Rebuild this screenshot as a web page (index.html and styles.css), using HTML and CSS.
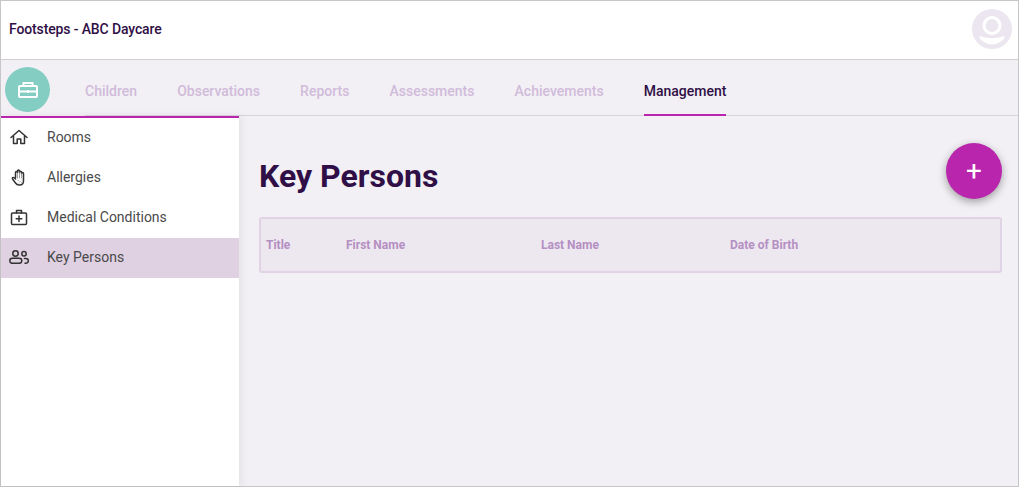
FILE: index.html
```html
<!DOCTYPE html>
<html lang="en">
<head>
    <meta charset="UTF-8">
    <title>Footsteps - ABC Daycare</title>
    <link rel="stylesheet" href="styles.css">
</head>
<body>
    <div class="app">
        <header class="topbar">
            <span class="brand">Footsteps - ABC Daycare</span>
            <svg class="avatar" viewBox="0 0 40 40" aria-hidden="true">
                <circle cx="20" cy="20" r="20" fill="#ebe6ef"/>
                <circle cx="20" cy="16.500" r="8" fill="none" stroke="#fff" stroke-width="3"/>
                <path d="M8.500 27c3 1.400 6.800 2.200 11.500 2.200s8.500-.8 11.500-2.200c1.500.5 1.500 1.700.5 2.600-3 3.600-7 5.900-12 5.900s-9-2.300-12-5.900c-1-.9-1-2.100.5-2.600z" fill="#fff"/>
            </svg>
        </header>

        <nav class="tabbar">
            <div class="section-badge">
                <svg viewBox="0 0 20 17" width="20" height="17" fill="none" stroke="#fff" stroke-width="2" aria-hidden="true">
                    <rect x="1" y="5" width="18" height="11" rx="1"/>
                    <path d="M5.500 5V2h9v3M1 10.500h18M10 9v3"/>
                </svg>
            </div>
            <ul class="tabs">
                <li class="tab">Children</li>
                <li class="tab">Observations</li>
                <li class="tab">Reports</li>
                <li class="tab">Assessments</li>
                <li class="tab">Achievements</li>
                <li class="tab active">Management</li>
            </ul>
        </nav>

        <div class="content">
            <aside class="sidebar">
                <a class="side-item">
                    <svg class="side-icon" viewBox="0 0 18 18" aria-hidden="true"><path d="M1 9.500 9 2.500l8 7M3.500 8v7.500h3.700v-4.500h3.600v4.500h3.700V8"/></svg>
                    Rooms
                </a>
                <a class="side-item">
                    <svg class="side-icon" viewBox="0 0 18 18" aria-hidden="true"><path d="M5.500 10V4.500a1 1 0 0 1 2 0V3a1 1 0 0 1 2 0v1.200a1 1 0 0 1 2 0V5.500a1 1 0 0 1 2 0v7.500c0 2.500-1.500 4-4 4H9c-1.700 0-2.700-.8-3.500-2L2.500 11c-.7-1 .7-2 1.600-1.200L5.500 11"/><path class="thin" d="M7.500 5v5M9.500 4v6M11.500 5v5M8 12.500h.1M10 13.500h.1M12 12h.1M9 15h.1M11.500 14.800h.1"/></svg>
                    Allergies
                </a>
                <a class="side-item">
                    <svg class="side-icon" viewBox="0 0 18 18" aria-hidden="true"><rect x="1.500" y="5" width="15" height="11.500" rx="1"/><path d="M6.500 5V2.500h5V5M9 8v5.500M6.200 10.700h5.600"/></svg>
                    Medical Conditions
                </a>
                <a class="side-item selected">
                    <svg class="side-icon wide" viewBox="0 0 20 14" aria-hidden="true"><circle cx="6.500" cy="3.500" r="2.700"/><rect x=".8" y="8.300" width="12" height="5" rx="2.500"/><circle cx="15" cy="3.800" r="2.200"/><path d="M15.500 8.500h1.500a2.300 2.300 0 0 1 0 4.700h-1"/></svg>
                    Key Persons
                </a>
            </aside>

            <main class="main">
                <div class="page-head">
                    <h1>Key Persons</h1>
                    <button class="fab" type="button">+</button>
                </div>
                <div class="grid-head">
                    <span class="col col-title">Title</span>
                    <span class="col col-first">First Name</span>
                    <span class="col col-last">Last Name</span>
                    <span class="col col-dob">Date of Birth</span>
                </div>
            </main>
        </div>
    </div>
</body>
</html>
```

FILE: styles.css
```css
* {
    margin: 0;
    padding: 0;
    box-sizing: border-box;
}
html, body {
    height: 100%;
    overflow: hidden;
}
body {
    font-family: Roboto, 'Liberation Sans', sans-serif;
    background: #f2f0f4;
}
.app {
    height: 487px;
    border: 1px solid #c6c6c6;
    display: flex;
    flex-direction: column;
}

/* Top bar */
.topbar {
    height: 59px;
    flex: none;
    background: #fff;
    border-bottom: 1px solid #d0ced2;
    display: flex;
    align-items: center;
    justify-content: space-between;
    padding: 0 6px 3px 8px;
}
.brand {
    font-size: 14px;
    font-weight: 500;
    letter-spacing: -0.13px;
    color: #2f0f46;
}
.avatar {
    width: 40px;
    height: 40px;
}

/* Tabs */
.tabbar {
    height: 56px;
    flex: none;
    display: flex;
    padding-left: 4px;
}
.section-badge {
    width: 45px;
    height: 45px;
    margin-top: 7px;
    border-radius: 50%;
    background: #83cdc3;
    display: flex;
    align-items: center;
    justify-content: center;
}
.tabs {
    list-style: none;
    display: flex;
    gap: 40.1px;
    flex: 1;
    height: 56px;
    margin-left: 35px;
    border-bottom: 1px solid #d6d3d9;
}
.tab {
    height: 56px;
    line-height: 62px;
    font-size: 14px;
    font-weight: 500;
    color: #d1bbdb;
}
.tab.active {
    color: #2f0f46;
    border-bottom: 2px solid #b926ad;
}

/* Sidebar */
.content {
    flex: 1;
    display: flex;
    min-height: 0;
}
.sidebar {
    width: 238px;
    flex: none;
    background: #fff;
    border-top: 2px solid #b926ad;
    box-shadow: 2px 0 8px rgba(60, 40, 70, 0.08);
}
.side-item {
    height: 40px;
    display: flex;
    align-items: center;
    gap: 19px;
    padding: 0 0 2px 9px;
    font-size: 14px;
    color: #4a4a4a;
}
.side-item.selected {
    background: #dfd0e2;
}
.side-icon {
    width: 18px;
    height: 18px;
    flex: none;
    fill: none;
    stroke: #333;
    stroke-width: 1.500;
    stroke-linejoin: round;
    stroke-linecap: round;
}
.side-icon .thin {
    stroke-width: 0.700;
    stroke: #777;
}
.side-icon.wide {
    width: 20px;
    height: 14px;
    margin: 0 -1px;
}

/* Main area */
.main {
    flex: 1;
    padding: 0 16px 0 20px;
}
.page-head {
    height: 101px;
    display: flex;
    align-items: flex-start;
    justify-content: space-between;
}
h1 {
    font-size: 32px;
    line-height: 38px;
    font-weight: 700;
    color: #2f0f46;
    margin-top: 41px;
}
.fab {
    width: 56px;
    height: 56px;
    margin-top: 27px;
    border: none;
    border-radius: 50%;
    background: #b926ad;
    color: #fff;
    font-family: Roboto, sans-serif;
    font-size: 28px;
    font-weight: 400;
    line-height: 56px;
    box-shadow: 0 3px 8px rgba(0, 0, 0, 0.35);
}
.grid-head {
    height: 56px;
    background: #ede8f0;
    border: 2px solid #e0d3e6;
    border-radius: 3px;
    display: flex;
    align-items: center;
    padding-left: 5px;
    font-size: 12px;
    font-weight: 700;
    color: #b48fc2;
}
.col-title {
    width: 80px;
}
.col-first {
    width: 195px;
}
.col-last {
    width: 189px;
}
```
